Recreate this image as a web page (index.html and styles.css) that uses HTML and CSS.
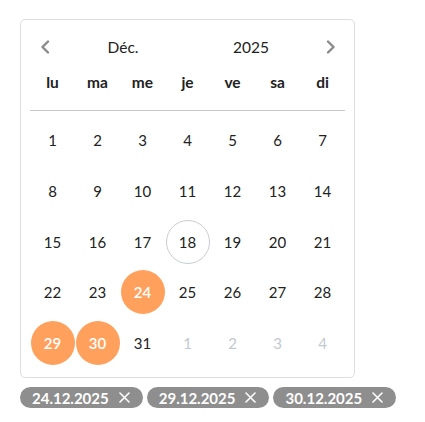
FILE: index.html
```html
<!DOCTYPE html>
<html lang="fr">
<head>
<meta charset="utf-8">
<link rel="stylesheet" href="styles.css">
</head>
<body>
<div class="page">
  <div class="card">
    <div class="header">
      <button class="nav"><svg width="10" height="14" viewBox="0 0 10 14"><path d="M8 1.5 L2.5 7 L8 12.5" fill="none" stroke="#8a8a8a" stroke-width="2.4" stroke-linecap="round" stroke-linejoin="round"/></svg></button>
      <div class="month">Déc.</div>
      <div class="year">2025</div>
      <button class="nav"><svg width="10" height="14" viewBox="0 0 10 14"><path d="M2 1.5 L7.5 7 L2 12.5" fill="none" stroke="#8a8a8a" stroke-width="2.4" stroke-linecap="round" stroke-linejoin="round"/></svg></button>
    </div>
    <div class="weekdays">
      <span>lu</span><span>ma</span><span>me</span><span>je</span><span>ve</span><span>sa</span><span>di</span>
    </div>
    <div class="sep"></div>
    <div class="days">
      <span class="d">1</span><span class="d">2</span><span class="d">3</span><span class="d">4</span><span class="d">5</span><span class="d">6</span><span class="d">7</span>
      <span class="d">8</span><span class="d">9</span><span class="d">10</span><span class="d">11</span><span class="d">12</span><span class="d">13</span><span class="d">14</span>
      <span class="d">15</span><span class="d">16</span><span class="d">17</span><span class="d today">18</span><span class="d">19</span><span class="d">20</span><span class="d">21</span>
      <span class="d">22</span><span class="d">23</span><span class="d sel">24</span><span class="d">25</span><span class="d">26</span><span class="d">27</span><span class="d">28</span>
      <span class="d sel">29</span><span class="d sel">30</span><span class="d">31</span><span class="d muted">1</span><span class="d muted">2</span><span class="d muted">3</span><span class="d muted">4</span>
    </div>
  </div>
  <div class="chips">
    <span class="chip">24.12.2025<svg class="x" width="11" height="11" viewBox="0 0 11 11"><path d="M1 1 L10 10 M10 1 L1 10" stroke="#fff" stroke-width="1.6" stroke-linecap="round"/></svg></span>
    <span class="chip">29.12.2025<svg class="x" width="11" height="11" viewBox="0 0 11 11"><path d="M1 1 L10 10 M10 1 L1 10" stroke="#fff" stroke-width="1.6" stroke-linecap="round"/></svg></span>
    <span class="chip">30.12.2025<svg class="x" width="11" height="11" viewBox="0 0 11 11"><path d="M1 1 L10 10 M10 1 L1 10" stroke="#fff" stroke-width="1.6" stroke-linecap="round"/></svg></span>
  </div>
</div>
</body>
</html>
```
FILE: styles.css
```css
html, body {
  margin: 0;
  padding: 0;
  background: #fff;
}
body {
  font-family: "Lato", "Liberation Sans", sans-serif;
  color: #222;
}
.page {
  padding: 19px 0 0 20px;
}
.card {
  box-sizing: border-box;
  width: 335px;
  border: 1px solid #dedede;
  border-radius: 5px;
  padding: 12px 9px 12px 9px;
}
.header {
  display: grid;
  grid-template-columns: 30px 126px 130px 29px;
  align-items: center;
  height: 30px;
}
.nav {
  border: 0;
  background: none;
  padding: 0;
  display: flex;
  align-items: center;
  justify-content: center;
  width: 100%;
  height: 30px;
}
.month, .year {
  text-align: center;
  font-size: 15.5px;
}
.weekdays {
  display: grid;
  grid-template-columns: repeat(7, 45px);
  height: 30px;
  align-items: center;
  margin-top: 5px;
  font-weight: 700;
  font-size: 15.5px;
}
.weekdays span {
  text-align: center;
}
.sep {
  height: 1px;
  background: #c8c8c8;
  margin-top: 13px;
}
.days {
  display: grid;
  grid-template-columns: repeat(7, 45px);
  grid-auto-rows: 44px;
  row-gap: 6.75px;
  margin-top: 7px;
  font-size: 15px;
}
.d {
  display: flex;
  align-items: center;
  justify-content: center;
  width: 44px;
  height: 44px;
  justify-self: center;
  border-radius: 50%;
  box-sizing: border-box;
}
.today {
  border: 1px solid #c9ccd4;
}
.sel {
  background: #ffa05c;
  color: #fff;
  font-weight: 600;
}
.muted {
  color: #c3c7d0;
}
.chips {
  display: flex;
  gap: 4px;
  margin-top: 9px;
}
.chip {
  display: inline-flex;
  align-items: center;
  gap: 10px;
  height: 21px;
  padding: 0 13px 0 12px;
  border-radius: 11px;
  background: #8e8e8e;
  color: #fff;
  font-weight: 700;
  font-size: 15px;
}
.x {
  display: block;
}
```
